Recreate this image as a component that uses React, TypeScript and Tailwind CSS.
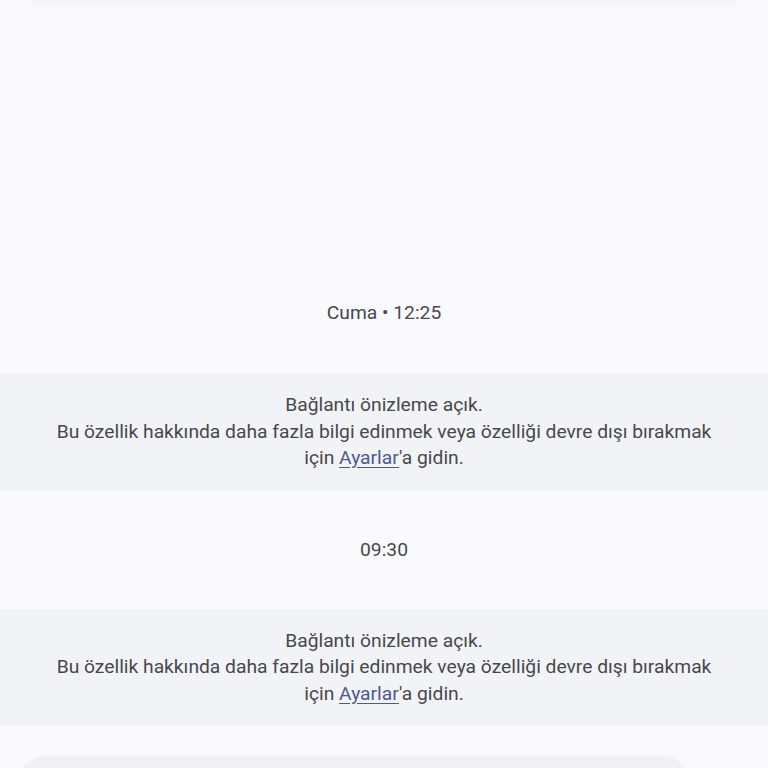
import React from "react";

function Notice() {
  return (
    <div className="bg-[#f2f3f7] py-[19px] text-center text-[19.25px] leading-[26.5px] text-[#48484c]">
      <div>Bağlantı önizleme açık.</div>
      <div>Bu özellik hakkında daha fazla bilgi edinmek veya özelliği devre dışı bırakmak</div>
      <div>
        için <span className="text-[#4c5a94] underline decoration-[#4c5a94] underline-offset-[3px]">Ayarlar</span>'a gidin.
      </div>
    </div>
  );
}

export default function App() {
  return (
    <div className="w-[768px] h-[768px] overflow-hidden bg-[#f9f9fe]" style={{ fontFamily: "Roboto, 'Noto Sans', sans-serif" }}>
      <div className="mx-[32px] h-[2px] bg-[#f4f4f8] shadow-[0_2px_4px_rgba(0,0,0,0.06)]"></div>
      <div className="h-[298px]"></div>
      <div className="text-center text-[19.25px] leading-[26px] text-[#48484c]">Cuma • 12:25</div>
      <div className="h-[47px]"></div>
      <Notice />
      <div className="h-[46px]"></div>
      <div className="text-center text-[19.25px] leading-[26px] text-[#48484c]">09:30</div>
      <div className="h-[46px]"></div>
      <Notice />
      <div className="h-[31px]"></div>
      <div className="ml-[18px] mr-[78px] h-[60px] rounded-[28px] bg-[#f0f0f5] shadow-[0_-1px_3px_rgba(0,0,0,0.05)]"></div>
    </div>
  );
}
